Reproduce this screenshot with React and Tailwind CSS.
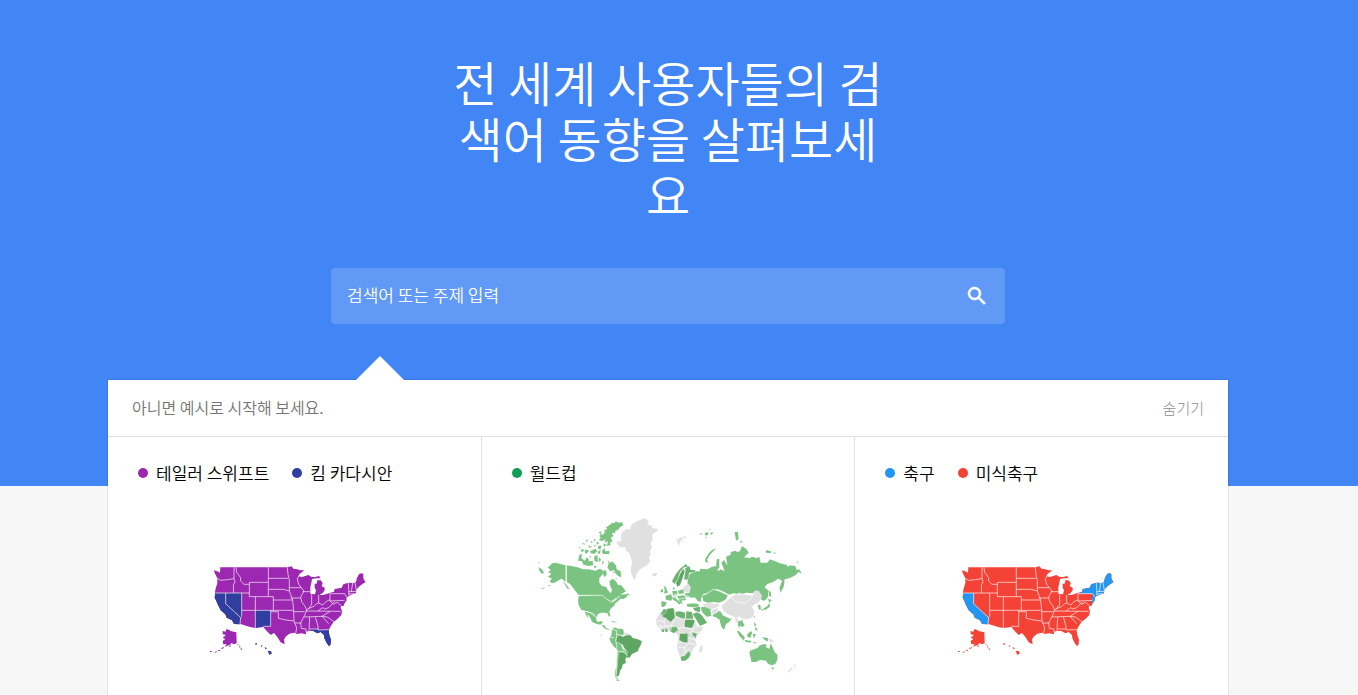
import React, { useState } from "react";

const US_LAND =
  "42,46 56,50 60,54 61,37 262,37 275,34 280,41 292,43 302,46 313,46 300,56 296,64 306,66 318,62 325,60 335,66 345,66 357,63 362,70 348,70 336,72 334,84 331,96 331,116 345,118 348,106 344,98 344,86 350,86 352,76 362,76 368,84 365,94 374,98 374,106 368,114 358,120 370,120 388,114 402,110 404,102 425,98 430,88 445,83 462,84 468,80 471,68 478,56 486,55 490,58 490,70 496,82 486,88 476,96 469,104 468,114 458,118 448,122 439,128 440,136 433,146 430,154 424,152 422,158 426,168 424,180 412,192 400,202 392,214 386,226 388,240 393,254 392,268 387,274 380,264 373,250 372,240 362,231 352,235 340,228 328,228 318,230 318,238 304,235 290,237 282,233 268,236 256,246 252,254 254,268 242,262 232,246 222,234 212,240 200,228 190,216 166,219 150,216 124,208 102,207 96,196 80,188 76,178 62,166 54,150 48,136 44,128 46,104 52,84 52,70 44,54";

const US_STATES = {
  CA: "46,114 77,114 77,146 122,188 120,208 102,207 96,196 80,188 76,178 62,166 54,150 48,136 44,128",
  NV: "77,114 125,114 125,184 122,188 77,146",
  NM: "166,166 212,166 212,214 190,214 166,219",
  FL: "332,222 354,222 356,226 386,224 388,240 393,254 392,268 387,274 380,264 373,250 372,240 362,231 352,235 340,228",
  NY: "402,110 404,102 425,98 430,88 445,83 447,112 446,122 440,126 434,116 392,116",
  NE: "445,83 462,84 468,80 471,68 478,56 486,55 490,58 490,70 496,82 486,88 476,96 469,104 468,114 458,118 448,122 440,124",
  NJ: "434,118 441,126 440,136 434,146 430,138",
};

const US_BORDERS = [
  "52,70 62,76 82,74 102,71",
  "102,37 102,71 105,80 100,90 101,114",
  "46,114 148,114",
  "108,37 110,52 122,68 122,78 132,88 148,88",
  "148,82 205,82 205,125 148,125 148,82",
  "205,37 205,82",
  "205,70 264,70",
  "205,103 250,103 268,108",
  "205,125 220,125 220,166",
  "77,114 77,146 122,188 125,184 125,114",
  "122,188 120,208",
  "166,125 166,219",
  "125,166 280,166",
  "220,135 278,135",
  "212,166 212,214 190,214",
  "212,170 235,170 235,190 258,195 282,198",
  "262,37 264,58 268,76 268,98 268,108 278,135 281,166 282,196 284,204",
  "268,98 304,98",
  "272,129 302,129",
  "304,98 312,108 304,122 302,129 306,142 314,152 320,164 316,176 310,188 302,204 304,220 318,222 318,232",
  "280,170 314,170",
  "284,204 304,204",
  "284,204 290,218 287,236",
  "300,56 292,72 296,88 304,98",
  "308,110 331,110",
  "335,118 335,148 325,162",
  "356,120 356,144",
  "320,164 332,158 342,154 350,146 356,144 368,150 378,140 390,134",
  "390,114 390,138 434,136",
  "392,116 434,116 440,126",
  "316,168 422,169",
  "312,186 366,184 386,206",
  "366,184 382,186 402,200",
  "366,184 390,169",
  "354,168 368,158 374,162 386,158 396,148 404,140",
  "390,138 400,148 412,142 424,152",
  "329,186 327,228",
  "346,186 354,214 354,224",
  "330,222 354,222 356,225 386,224",
  "445,83 447,122",
  "458,84 454,110",
  "465,82 469,106",
  "446,110 468,109",
  "446,117 462,116",
];

const ALASKA =
  "68,238 68,228 76,230 80,222 86,224 94,229 109,232 110,265 102,268 94,264 90,270 82,272 74,276 80,268 70,268 68,258 76,252 68,248 78,240";

const US_ISLANDS = [
  "30,288 35,288 35,291 30,291",
  "44,291 50,289 50,292 44,293",
  "54,286 60,284 60,287 54,288",
  "64,279 71,276 71,280 64,282",
  "86,274 92,271 92,276",
  "112,266 117,269 114,271",
  "117,271 122,276 119,278",
  "121,278 127,283 124,286",
];

const HAWAII = [
  "166,265 171,264 170,269 166,269",
  "182,271 188,272 184,276",
  "194,276 201,280 196,283",
  "203,287 213,289 216,295 208,300",
];

function UsMap({ base, accent, hawaii, states, label }) {
  return (
    <svg viewBox="12 0 540 330" className="h-[110px] w-[180px]" role="img" aria-label={label}>
      <g fill={base}>
        <polygon points={US_LAND} />
        <polygon points={ALASKA} />
        {US_ISLANDS.map((p) => (
          <polygon key={p} points={p} />
        ))}
      </g>
      {states.map((s) => (
        <polygon key={s} points={US_STATES[s]} fill={accent} />
      ))}
      {HAWAII.map((p) => (
        <polygon key={p} points={p} fill={hawaii} />
      ))}
      <g fill="none" stroke="#fff" strokeOpacity="0.75" strokeWidth="2.6" strokeLinejoin="round">
        {US_BORDERS.map((p) => (
          <polyline key={p} points={p} />
        ))}
      </g>
    </svg>
  );
}

const GREEN = "#7bc381";
const MID = "#6bb370";
const DARK = "#5ea662";
const NONE = "#e0e0e0";

// each group is drawn in its own local coordinates
const WORLD = [
  {
    // arctic and alaska
    at: "translate(6 0)",
    shapes: [
      [GREEN, "56,170 66,160 78,158 92,162 107,166 107,216 100,210 94,206 84,212 74,218 66,220 58,214 66,206 54,200 64,192 54,186 62,180 52,172"],
      [GREEN, "24,154 30,160 26,160", "26,172 36,178 42,188 36,192 28,182"],
      [GREEN, "52,229 60,224 60,228", "30,236 44,232 40,236", "98,214 104,218 114,230 118,238 112,236 106,226"],
      [GREEN, "110,166 124,168 142,172 160,178 178,178 196,182 210,176 222,184 216,196 208,204 208,218 216,228 228,230 234,240 242,250 246,240 240,226 238,214 248,206 258,214 264,224 274,226 282,236 288,244 278,250 272,254 292,252 290,262 278,268 268,264 256,268 240,280 226,276 214,266 202,258 146,256 134,240 120,222 110,216"],
      [GREEN, "240,44 246,38 254,40 256,34 268,38 276,36 280,46 270,52 264,60 256,62 256,70 246,68 250,78 242,84 248,94 240,98 242,106 230,108 234,94 224,98 226,88 216,94 206,90 212,84 208,78 216,70 218,76 226,64 220,60 232,58 228,52"],
      [GREEN, "148,134 156,132 154,144 164,152 170,142 176,146 176,154 188,152 190,166 176,168 160,164 156,154 144,152"],
      [GREEN, "232,148 240,158 246,154 258,166 260,178 272,184 274,202 264,198 256,190 252,180 240,184 232,172 236,160"],
      [GREEN, "216,184 228,180 230,194 224,202 220,194", "208,192 214,190 214,198", "246,184 254,186 252,190", "256,204 262,206 258,208"],
      [GREEN, "154,118 162,118 160,126 152,124", "166,118 178,122 168,132 164,126", "180,124 196,116 202,124 192,132 182,130", "204,108 214,106 212,118 204,116", "206,122 212,120 210,132 202,130"],
      [GREEN, "216,122 224,114 226,124 238,122 238,132 218,132", "192,140 202,134 204,156 194,154", "206,140 214,150 206,156", "216,152 222,156 218,166", "190,168 200,168 196,176", "178,136 184,140 180,144"],
      [GREEN, "166,92 173,88 172,97", "180,98 186,92 188,98", "190,88 197,88 194,95", "156,102 162,98 166,104", "200,94 208,100 200,104", "206,66 214,64 212,74", "220,100 230,104 222,112", "174,106 186,110 178,114", "190,104 198,106 194,110", "148,110 152,112 148,116"],
      [NONE, "258,98 268,94 276,90 272,82 276,66 288,58 300,58 304,44 320,34 336,28 344,24 356,32 352,42 366,48 366,54 382,56 384,62 372,70 366,76 368,92 362,98 366,112 360,124 362,136 356,144 362,154 352,164 340,172 328,180 320,190 316,208 310,206 304,192 302,174 306,160 304,146 298,130 288,122 286,112 272,112"],
      [NONE, "366,192 372,190 380,187 382,194 374,199 368,198"],
    ],
  },
  {
    // the americas
    at: "translate(126 210)",
    shapes: [
      [GREEN, "26,48 98,48 108,56 118,60 118,68 130,66 140,58 150,50 152,56 144,64 136,70 132,78 124,84 118,94 121,108 117,110 112,100 104,98 94,98 84,102 80,112 74,104 66,98 56,96 44,92 34,90 26,76 24,62"],
      [GREEN, "44,94 56,98 66,100 74,106 78,112 80,122 84,126 92,124 99,124 96,130 92,134 80,132 66,126 60,112 52,102 56,116 48,106"],
      [GREEN, "94,134 104,136 108,144 118,148 116,150 104,146", "120,122 132,124 142,128 130,127", "168,46 174,40 180,46"],
      [NONE, "106,118 118,120 118,122", "104,136 108,138 108,142 104,140"],
      [GREEN, "126,148 134,142 144,146 158,146 162,156 160,166 150,164 140,170 138,184 146,190 156,194 160,208 172,214 176,224 180,232 172,234 160,216 146,220 142,256 138,292 146,298 138,296 134,282 138,262 140,240 142,220 140,208 130,198 122,186 118,176 124,166"],
      [NONE, "162,156 172,160 182,164 178,168 164,166"],
      [DARK, "140,170 150,164 158,170 170,166 182,166 188,174 204,178 216,184 212,196 206,206 204,214 194,218 186,222 180,232 174,232 168,226 174,220 172,214 164,206 158,194 146,188 138,184"],
      [DARK, "146,220 158,216 172,228 166,238 168,248 158,254 156,264 150,272 148,284 142,290 138,288 142,262 144,240"],
      [GREEN, "136,300 144,298 150,304 142,302", "92,164 94,164 94,168 92,168"],
    ],
  },
  {
    // northern eurasia
    at: "translate(366 0)",
    shapes: [
      [GREEN, "114,206 116,196 124,190 138,184 150,184 150,176 172,178 186,170 200,168 204,184 212,178 224,184 214,158 222,150 232,166 228,140 242,134 242,126 256,122 262,126 270,124 274,112 276,108 290,118 296,128 282,142 300,144 306,140 320,144 328,140 332,158 352,158 360,148 376,154 390,160 410,164 414,170 420,166 436,168 440,180 448,178 456,192 446,186 436,196 420,204 404,208 402,228 392,248 388,234 396,212 384,206 370,216 352,222 344,232 356,242 354,260 344,272 334,270 332,252 318,242 308,250 290,248 270,254 250,250 238,254 222,246 204,238 188,240 184,250 160,252 154,264 152,276 144,274 134,262 118,248 122,232 112,220"],
      [GREEN, "200,148 208,146 208,172 202,180 198,170"],
      [MID, "66,214 76,194 90,176 108,162 114,170 102,172 90,186 84,206 74,222"],
      [DARK, "84,208 92,188 100,176 104,184 98,204 90,226 82,230 78,220"],
      [MID, "106,186 106,174 118,168 122,180 136,180 134,186 118,188 112,210 102,208"],
      [NONE, "104,228 114,222 120,234 118,248 104,246 98,238"],
      [GREEN, "166,156 166,146 176,130 186,120 200,114 190,124 180,134 172,148 174,158"],
      [GREEN, "254,66 264,66 266,88 258,92", "270,92 278,94 272,100", "348,120 364,124 362,130 348,128", "372,125 378,130 372,131", "441,154 446,157 442,159"],
      [GREEN, "150,70 158,71 152,75", "164,70 172,66 176,72 168,78", "180,68 191,67 184,75", "177,57 181,57 181,62", "166,80 172,82 167,84"],
      [NONE, "78,84 84,88 94,80 98,88 90,96 88,108 82,98", "98,80 109,78 104,87", "96,94 102,96 97,99"],
    ],
  },
  {
    // europe, africa, middle east
    at: "translate(366 210)",
    shapes: [
      [GREEN, "42,18 47,20 54,38 42,41 44,32", "32,30 39,27 39,37 32,37", "34,64 50,66 46,78 38,82 34,78", "46,48 62,42 68,52 64,62 48,60", "66,34 82,32 82,46 68,48", "84,32 100,28 102,40 86,43"],
      [GREEN, "66,52 78,50 80,58 92,68 88,74 80,66 70,60", "82,48 104,46 108,60 94,62 98,74 90,68", "104,40 120,38 136,44 134,52 122,54 106,48", "110,72 128,70 146,72 146,80 128,82 112,80", "68,24 73,20 73,33"],
      [NONE, "30,98 40,90 70,84 76,94 106,98 124,100 134,124 142,140 160,142 150,158 140,168 136,180 140,194 130,206 126,214 118,230 106,240 94,242 90,230 84,214 80,200 84,186 86,170 78,158 60,154 46,156 34,150 20,134 18,120 24,108"],
      [MID, "32,104 40,88 50,88 48,98 38,104"],
      [DARK, "36,108 48,98 52,86 70,84 72,92 76,112 62,126 46,114"],
      [MID, "76,96 90,94 106,98 104,118 96,116 76,106", "108,94 126,96 130,116 108,116"],
      [DARK, "106,118 130,118 134,124 126,144 104,142 102,130"],
      [MID, "34,148 42,148 42,156 36,156", "45,146 52,146 52,156 46,156", "61,142 80,138 84,150 72,160 60,154", "128,156 140,160 138,174 128,166", "92,230 104,228 116,214 122,222 116,234 106,242 94,242"],
      [DARK, "90,160 116,158 114,188 102,188 88,180"],
      [NONE, "150,202 158,194 158,206 152,220 148,214"],
      [MID, "128,102 142,96 156,106 168,124 172,128 150,138 142,124", "128,84 150,80 150,96 136,94"],
      [GREEN, "152,82 164,80 182,86 184,108 170,110 156,96", "188,104 200,98 206,92 212,96 204,112 190,110"],
      [NONE, "158,72 180,68 206,70 208,78 196,84 182,88 164,80", "186,90 206,84 198,98 186,102"],
      [GREEN, "156,46 172,42 174,34 190,28 210,34 234,46 226,60 208,68 190,66 174,68 160,64"],
      [GREEN, "204,106 212,94 218,106 240,116 246,114 238,126 228,132 222,150 214,140 208,118 198,114"],
    ],
  },
  {
    // east asia and oceania
    at: "translate(576 150)",
    shapes: [
      [NONE, "4,138 20,122 32,112 46,104 58,98 76,104 98,106 104,92 116,92 126,108 120,122 112,130 102,134 96,140 104,156 100,168 90,176 78,178 68,176 58,170 46,172 36,168 24,162 12,154"],
      [NONE, "44,172 52,170 54,184 48,190", "144,236 154,238 162,247 150,246", "221,313 228,316 222,325", "216,322 218,326 206,338 203,334"],
      [GREEN, "147,90 153,98 153,112 147,106", "144,116 155,120 148,129", "148,128 150,140 136,150 128,147 142,138", "122,149 130,147 128,153", "113,134 121,136 123,148 117,149"],
      [GREEN, "54,182 62,184 68,178 68,186 74,196 66,202 60,196 58,206 54,196", "50,212 58,214 74,232 72,242 60,230", "74,239 94,243 92,248 76,245", "82,222 92,214 97,216 92,233 82,231", "98,223 108,221 102,236", "103,184 109,196 103,199", "107,199 114,212 105,209", "127,231 144,234 143,245 134,240", "99,247 110,246 104,251", "101,167 105,170 102,175"],
      [GREEN, "88,278 90,272 102,268 112,264 120,256 132,252 140,254 138,262 148,266 152,250 158,262 164,276 173,286 172,300 166,312 156,316 144,312 138,302 120,300 108,306 94,306 92,294", "154,322 163,323 158,330"],
    ],
  },
];

const WORLD_BORDERS = [
  "115,166 115,218",
  "146,256 224,256 236,268 250,274 266,264 276,258",
  "158,302 182,306 192,312 202,320",
  // south america
  "252,358 266,362 266,380 262,394",
  "266,372 284,378",
  "244,380 258,384",
  "264,396 268,424 290,424 298,438",
  "280,404 286,420",
  "268,424 264,496",
  // africa
  "386,332 408,334 414,322",
  "408,334 412,350 396,350",
  "412,350 430,346 442,322 440,306",
  "442,320 470,328 468,352 450,356 446,350 428,350",
  "430,346 428,364",
  "394,342 404,358",
  "474,306 472,328 498,328",
  "468,352 492,356 506,350",
  "452,370 480,370 494,364",
  "480,370 480,400 452,396",
  "480,384 504,390",
  "448,412 470,412 482,400 502,404",
  "470,412 470,430 456,440",
  "470,426 486,416",
  "492,354 498,368 522,366",
  // eurasia
  "522,256 538,250 556,238 576,244 600,256",
  "608,262 626,276 650,280 668,266 676,256",
  "572,294 590,276 606,264 622,252 652,254 674,256",
  "546,282 572,280 590,280",
  "548,300 552,318",
  "432,256 448,252 470,254 490,262",
  "432,246 434,260 450,268 470,264",
  "498,304 514,308 532,322",
  "640,320 630,330",
];

function WorldMap() {
  return (
    <svg viewBox="0 0 840 600" className="h-[200px] w-[280px]" role="img" aria-label="월드컵">
      {WORLD.map((region) => (
        <g key={region.at} transform={region.at} stroke="#fff" strokeWidth="0.5" strokeOpacity="0.5">
          {region.shapes.map(([fill, ...polys]) =>
            polys.map((p) => <polygon key={p} points={p} fill={fill} />)
          )}
        </g>
      ))}
      <g fill="none" stroke="#fff" strokeOpacity="0.8" strokeWidth="2.4" strokeLinejoin="round">
        {WORLD_BORDERS.map((p) => (
          <polyline key={p} points={p} />
        ))}
      </g>
    </svg>
  );
}

const examples = [
  {
    terms: [
      { name: "테일러 스위프트", dot: "bg-[#9c27b0]" },
      { name: "킴 카다시안", dot: "bg-[#303f9f]" },
    ],
    map: (
      <UsMap
        base="#9c27b0"
        accent="#303f9f"
        hawaii="#303f9f"
        states={["CA", "NV", "NM", "FL"]}
        label="테일러 스위프트, 킴 카다시안"
      />
    ),
  },
  {
    terms: [{ name: "월드컵", dot: "bg-[#0f9d58]" }],
    map: <WorldMap />,
  },
  {
    terms: [
      { name: "축구", dot: "bg-[#2196f3]" },
      { name: "미식축구", dot: "bg-[#f44336]" },
    ],
    map: (
      <UsMap
        base="#f44336"
        accent="#2196f3"
        hawaii="#f44336"
        states={["CA", "NY", "NE", "NJ"]}
        label="축구, 미식축구"
      />
    ),
  },
];

const ExampleCard = ({ terms, map }) => (
  <a href="#example" className="flex flex-1 flex-col pt-6">
    <div className="flex gap-[23px] px-[30px]">
      {terms.map((t) => (
        <div key={t.name} className="flex items-center gap-2 text-[17px] leading-6 font-[350] text-black">
          <span className={`size-[10px] rounded-full ${t.dot}`} />
          {t.name}
        </div>
      ))}
    </div>
    <div className="flex h-[250px] items-center justify-center">{map}</div>
  </a>
);

const App = () => {
  const [term, setTerm] = useState("");
  const [open, setOpen] = useState(true);

  return (
    <div className="flex h-screen flex-col overflow-hidden bg-[#f7f7f7] font-['Noto_Sans_CJK_KR',sans-serif]">
      {/* Hero */}
      <header className="flex flex-col items-center bg-[#4285f5] pr-[22px] pt-[53px] pb-[162px]">
        <h1 className="w-md text-center text-[48px] leading-14 font-[350] text-white">
          전 세계 사용자들의 검색어 동향을 살펴보세요
        </h1>
        <form
          className="mt-[47px] flex h-14 w-full max-w-[674px] items-center rounded bg-[#6199f7] px-4"
          onSubmit={(e) => e.preventDefault()}
        >
          <input
            type="text"
            aria-label="검색어 또는 주제 입력"
            placeholder="검색어 또는 주제 입력"
            value={term}
            onChange={(e) => setTerm(e.target.value)}
            className="min-w-0 flex-1 bg-transparent pb-[2px] text-[17px] leading-6 font-[350] text-white outline-none placeholder:text-white"
          />
          <button type="submit" aria-label="검색">
            <svg viewBox="0 0 24 24" className="size-6 fill-white stroke-white" strokeWidth="0.6">
              <path d="M15.5 14h-.79l-.28-.27A6.471 6.471 0 0 0 16 9.5 6.5 6.5 0 1 0 9.5 16c1.61 0 3.09-.59 4.23-1.57l.27.28v.79l5 4.99L20.49 19l-4.99-5zm-6 0C7.01 14 5 11.99 5 9.5S7.01 5 9.5 5 14 7.01 14 9.5 11.99 14 9.5 14z" />
            </svg>
          </button>
        </form>
      </header>

      {/* Examples */}
      <main className="-mt-[106px] flex flex-1 justify-center pr-[22px]">
        <section className="relative flex w-full max-w-[1120px] flex-col bg-white shadow-[0_0_2px_rgba(0,0,0,0.2)]">
          <span className="absolute -top-6 left-[248px] size-0 border-x-24 border-b-24 border-x-transparent border-b-white" />
          <div className="flex h-[57px] items-center justify-between border-b border-[#e0e0e0] px-6">
            <h2 className="pb-[2px] text-base font-[350] text-[#757575]">아니면 예시로 시작해 보세요.</h2>
            <button
              type="button"
              className="text-[15px] font-light text-[#8e8e8e]"
              onClick={() => setOpen(!open)}
            >
              숨기기
            </button>
          </div>
          {open && (
            <div className="flex flex-1 divide-x divide-[#e0e0e0]">
              {examples.map((ex) => (
                <ExampleCard key={ex.terms[0].name} {...ex} />
              ))}
            </div>
          )}
        </section>
      </main>
    </div>
  );
};

export default App;
